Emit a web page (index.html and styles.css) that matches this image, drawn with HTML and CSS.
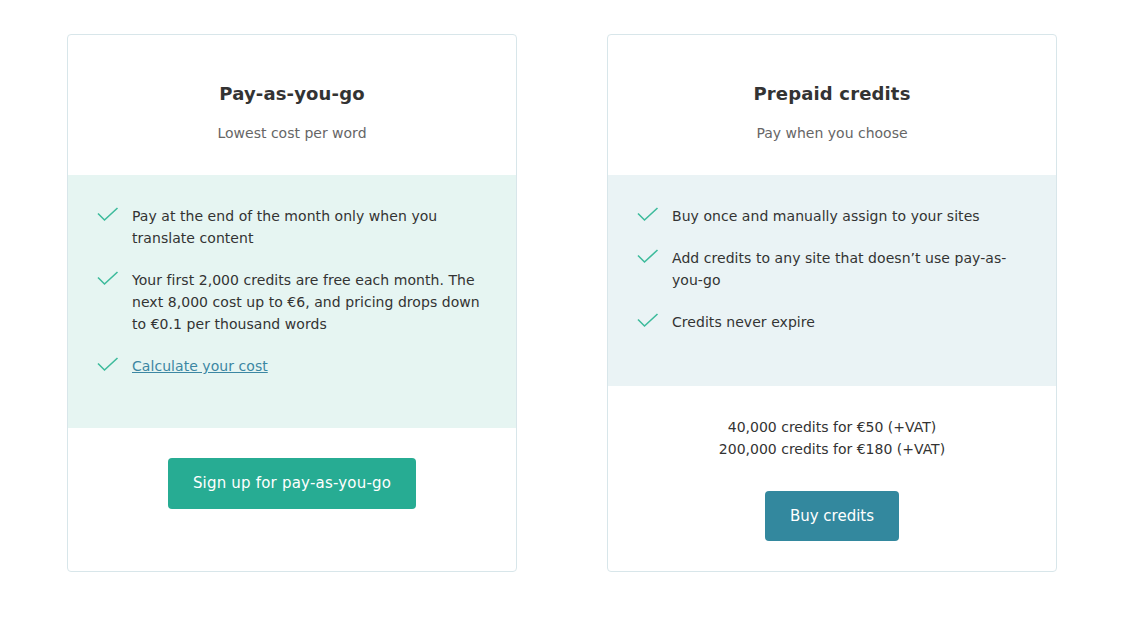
FILE: index.html
```html
<!DOCTYPE html>
<html lang="en">
<head>
<meta charset="UTF-8" />
<meta name="viewport" content="width=device-width, initial-scale=1" />
<title>Pricing plans</title>
<link rel="stylesheet" href="styles.css">
</head>
<body>

<main class="plans">
  <section class="plan">
    <div class="plan-head">
      <h2 class="plan-title">Pay-as-you-go</h2>
      <p class="plan-sub">Lowest cost per word</p>
    </div>
    <ul class="features features-green">
      <li>
        <svg class="check" viewBox="0 0 22 16"><path d="M1 6.5 L7.5 13 L20.5 1" /></svg>
        <span>Pay at the end of the month only when you translate content</span>
      </li>
      <li>
        <svg class="check" viewBox="0 0 22 16"><path d="M1 6.5 L7.5 13 L20.5 1" /></svg>
        <span>Your first 2,000 credits are free each month. The next 8,000 cost up to €6, and pricing drops down to €0.1 per thousand words</span>
      </li>
      <li>
        <svg class="check" viewBox="0 0 22 16"><path d="M1 6.5 L7.5 13 L20.5 1" /></svg>
        <span><a href="#" class="link">Calculate your cost</a></span>
      </li>
    </ul>
    <div class="plan-foot">
      <a href="#" class="btn btn-green">Sign up for pay-as-you-go</a>
    </div>
  </section>

  <section class="plan">
    <div class="plan-head">
      <h2 class="plan-title">Prepaid credits</h2>
      <p class="plan-sub">Pay when you choose</p>
    </div>
    <ul class="features features-blue">
      <li>
        <svg class="check" viewBox="0 0 22 16"><path d="M1 6.5 L7.5 13 L20.5 1" /></svg>
        <span>Buy once and manually assign to your sites</span>
      </li>
      <li>
        <svg class="check" viewBox="0 0 22 16"><path d="M1 6.5 L7.5 13 L20.5 1" /></svg>
        <span>Add credits to any site that doesn’t use pay-as-you-go</span>
      </li>
      <li>
        <svg class="check" viewBox="0 0 22 16"><path d="M1 6.5 L7.5 13 L20.5 1" /></svg>
        <span>Credits never expire</span>
      </li>
    </ul>
    <div class="plan-foot">
      <p class="prices">40,000 credits for €50 (+VAT)<br>200,000 credits for €180 (+VAT)</p>
      <a href="#" class="btn btn-blue">Buy credits</a>
    </div>
  </section>
</main>

</body>
</html>
```

FILE: styles.css
```css
body {
  margin: 0; padding: 0;
  font-family: 'DejaVu Sans', Verdana, sans-serif;
  background: #fff;
  color: #333;
}
.plans {
  display: flex;
  gap: 90px;
  padding: 34px 0 0 67px;
}
.plan {
  width: 448px;
  border: 1px solid #d8e6ea;
  border-radius: 4px;
  display: flex;
  flex-direction: column;
  overflow: hidden;
}
.plan-head {
  text-align: center;
  padding: 47px 20px 32px;
}
.plan-title {
  margin: 0;
  font-size: 18px;
  line-height: 24px;
  font-weight: 700;
  letter-spacing: 0.15px;
  color: #333;
}
.plan-sub {
  margin: 17px 0 0;
  font-size: 14px;
  line-height: 20px;
  color: #666;
}
.features {
  list-style: none;
  margin: 0;
  padding: 30px 29px 31px 29px;
}
.features-green {
  background: #e6f5f2;
}
.features-blue {
  background: #eaf3f5;
  padding-bottom: 33px;
}
.features li {
  display: flex;
  align-items: flex-start;
  font-size: 14px;
  line-height: 22px;
  letter-spacing: 0.05px;
  margin-bottom: 20px;
}
.check {
  flex: none;
  width: 22px;
  height: 16px;
  margin-top: 2px;
  margin-right: 13px;
}
.check path {
  fill: none;
  stroke: #3dbb9c;
  stroke-width: 1.6;
}
.link {
  color: #3c87a3;
  text-decoration: underline;
}
.plan-foot {
  flex: 1;
  text-align: center;
  padding: 30px 20px 30px;
}
.prices {
  margin: 0 0 31px;
  font-size: 14px;
  line-height: 22px;
  color: #333;
}
.btn {
  display: inline-block;
  padding: 15px 25px;
  font-size: 15px;
  line-height: 21px;
  color: #fff;
  text-decoration: none;
  border-radius: 4px;
}
.btn-green {
  background: #27ac93;
  padding: 15px 25px;
  letter-spacing: 0.2px;
}
.btn-blue {
  background: #33889e;
  line-height: 20px;
}
```
